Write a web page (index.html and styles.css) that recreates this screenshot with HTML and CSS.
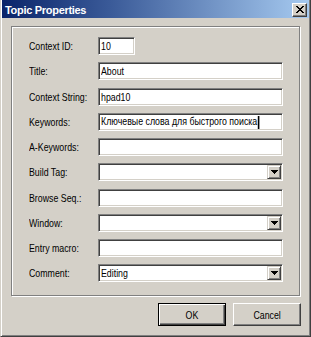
FILE: index.html
```html
<!DOCTYPE html>
<html>
<head>
<meta charset="utf-8">
<link rel="stylesheet" href="styles.css">
</head>
<body>
<div class="window">
  <div class="caption">
    <span class="caption-title">Topic Properties</span>
    <span class="close-btn"><svg width="8" height="7" viewBox="0 0 8 7"><path d="M0 0h2v1H0zM6 0h2v1H6zM1 1h2v1H1zM5 1h2v1H5zM2 2h4v1H2zM3 3h2v1H3zM2 4h4v1H2zM1 5h2v1H1zM5 5h2v1H5zM0 6h2v1H0zM6 6h2v1H6z"/></svg></span>
  </div>
  <div class="body">
    <div class="group">
      <span class="label"><span class="txt">Context ID:</span></span><span class="field field-short"><span class="txt">10</span></span>
      <span class="label"><span class="txt">Title:</span></span><span class="field"><span class="txt">About</span></span>
      <span class="label"><span class="txt">Context String:</span></span><span class="field"><span class="txt">hpad10</span></span>
      <span class="label"><span class="txt">Keywords:</span></span><span class="field"><span class="txt">Ключевые слова для быстрого поиска<span class="caret"></span></span></span>
      <span class="label"><span class="txt">A-Keywords:</span></span><span class="field"></span>
      <span class="label"><span class="txt">Build Tag:</span></span><span class="field combo"><span class="txt"></span><span class="combo-btn"><svg width="7" height="4" viewBox="0 0 7 4"><path d="M0 0h7v1H0zM1 1h5v1H1zM2 2h3v1H2zM3 3h1v1H3z"/></svg></span></span>
      <span class="label"><span class="txt">Browse Seq.:</span></span><span class="field"></span>
      <span class="label"><span class="txt">Window:</span></span><span class="field combo"><span class="txt"></span><span class="combo-btn"><svg width="7" height="4" viewBox="0 0 7 4"><path d="M0 0h7v1H0zM1 1h5v1H1zM2 2h3v1H2zM3 3h1v1H3z"/></svg></span></span>
      <span class="label"><span class="txt">Entry macro:</span></span><span class="field"></span>
      <span class="label"><span class="txt">Comment:</span></span><span class="field combo"><span class="txt">Editing</span><span class="combo-btn"><svg width="7" height="4" viewBox="0 0 7 4"><path d="M0 0h7v1H0zM1 1h5v1H1zM2 2h3v1H2zM3 3h1v1H3z"/></svg></span></span>
    </div>
    <div class="buttons">
      <span class="btn btn-default"><span class="txt">OK</span></span>
      <span class="btn"><span class="txt">Cancel</span></span>
    </div>
  </div>
</div>
</body>
</html>
```
FILE: styles.css
```css
* { box-sizing: border-box; }
body {
  margin: 0;
  font-family: "Liberation Sans", Arial, sans-serif;
  font-size: 11px;
  color: #000;
  background: #d4d0c8;
}
.window {
  width: 311px;
  height: 337px;
  background: #d4d0c8;
  border-left: 1px solid #d4d0c8;
  border-right: 1px solid #404040;
  border-bottom: 1px solid #404040;
  box-shadow: inset 1px 0 #fff, inset -1px -1px #808080;
  padding: 0 1px 1px 1px;
  display: flex;
  flex-direction: column;
}
.caption {
  height: 18px;
  flex: none;
  display: flex;
  align-items: center;
  justify-content: space-between;
  background: linear-gradient(90deg, #0a246a 0%, #3a5a98 35%, #a6caf0 100%);
  padding: 1px 2px 0 3px;
}
.caption-title {
  color: #fff;
  font-weight: bold;
  font-size: 11px;
  letter-spacing: -0.3px;
}
.close-btn {
  width: 15px;
  height: 14px;
  background: #d4d0c8;
  border: 1px solid;
  border-color: #fff #404040 #404040 #fff;
  box-shadow: inset -1px -1px #808080;
  display: flex;
  align-items: center;
  justify-content: center;
}
.close-btn svg { display: block; }
.txt {
  display: inline-block;
  white-space: nowrap;
  transform: scaleX(0.8);
  transform-origin: 0 50%;
}
.body {
  flex: 1;
  padding: 8px 8px 0 9px;
  display: flex;
  flex-direction: column;
}
.group {
  width: 289px;
  height: 270px;
  border: 1px solid #808080;
  box-shadow: inset 1px 1px #fff, 1px 1px #fff;
  padding: 10px 0 0 17px;
  display: grid;
  grid-template-columns: 69px 185px;
  grid-auto-rows: 18px;
  row-gap: 7.25px;
  align-content: start;
  align-items: center;
}
.label { white-space: nowrap; }
.field {
  height: 18px;
  background: #fff;
  border: 1px solid;
  border-color: #808080 #fff #fff #808080;
  box-shadow: inset 1px 1px #404040, inset -1px -1px #d4d0c8;
  padding: 0 0 0 2px;
  display: flex;
  align-items: center;
  white-space: nowrap;
  overflow: hidden;
}
.field-short { width: 37px; }
.caret {
  display: inline-block;
  width: 1.25px;
  height: 13px;
  background: #000;
  margin-left: 1px;
  vertical-align: middle;
}
.combo {
  justify-content: space-between;
  padding: 1px 1px 1px 2px;
}
.combo-btn {
  width: 14px;
  height: 14px;
  flex: none;
  background: #d4d0c8;
  border: 1px solid;
  border-color: #d4d0c8 #404040 #404040 #d4d0c8;
  box-shadow: inset 1px 1px #fff, inset -1px -1px #808080;
  display: flex;
  align-items: center;
  justify-content: center;
}
.combo-btn svg { display: block; }
.buttons {
  display: flex;
  justify-content: flex-end;
  gap: 7px;
  margin-top: 7px;
}
.btn {
  width: 68px;
  height: 23px;
  border: 1px solid;
  border-color: #fff #404040 #404040 #fff;
  box-shadow: inset -1px -1px #808080;
  display: flex;
  align-items: center;
  justify-content: center;
}
.btn .txt { transform-origin: 50% 50%; }
.btn-default {
  border-color: #000;
  box-shadow: inset 1px 1px #fff, inset -1px -1px #404040, inset -2px -2px #808080;
}
```
